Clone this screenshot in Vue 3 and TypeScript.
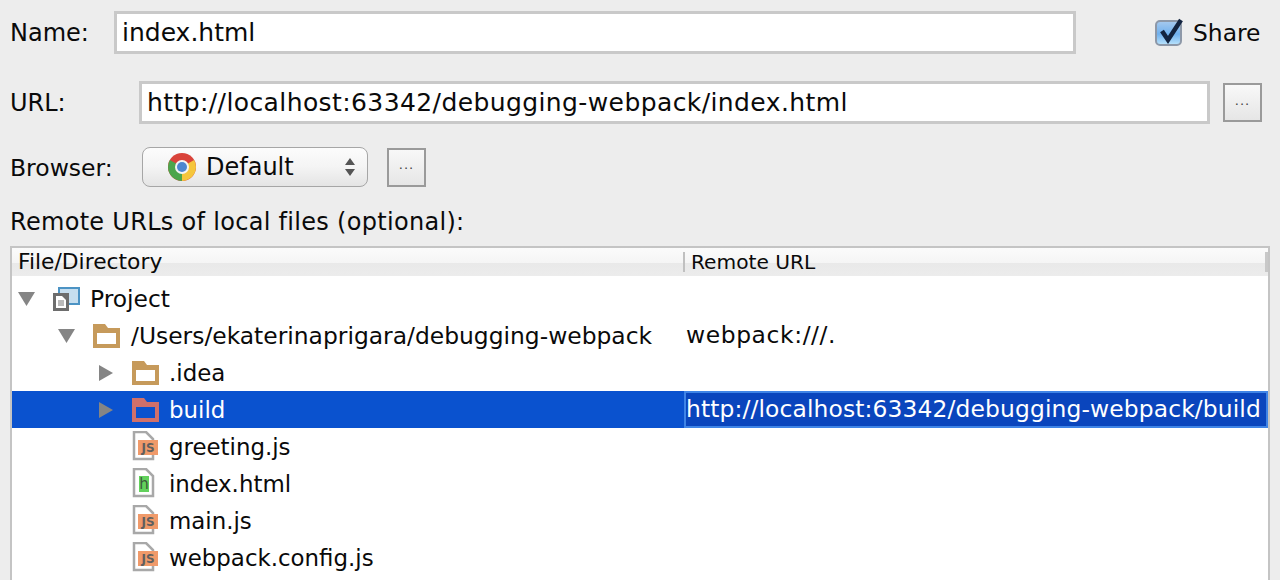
<script setup lang="ts">
interface TreeRow {
  name: string;
  depth: number;
  arrow?: 'open' | 'closed';
  icon: 'project' | 'folder' | 'js' | 'html';
  remote?: string;
  selected?: boolean;
}

const rows: TreeRow[] = [
  { name: 'Project', depth: 0, arrow: 'open', icon: 'project' },
  { name: '/Users/ekaterinaprigara/debugging-webpack', depth: 1, arrow: 'open', icon: 'folder', remote: 'webpack:///.' },
  { name: '.idea', depth: 2, arrow: 'closed', icon: 'folder' },
  { name: 'build', depth: 2, arrow: 'closed', icon: 'folder', remote: 'http://localhost:63342/debugging-webpack/build', selected: true },
  { name: 'greeting.js', depth: 2, icon: 'js' },
  { name: 'index.html', depth: 2, icon: 'html' },
  { name: 'main.js', depth: 2, icon: 'js' },
  { name: 'webpack.config.js', depth: 2, icon: 'js' },
];
</script>

<template>
  <div class="dialog">
    <div class="row name-row">
      <label class="name-label">Name:</label>
      <div class="field name-field">index.html</div>
      <div class="share">
        <span class="checkbox">
          <svg width="32" height="32" viewBox="0 0 32 32">
            <path d="M7 14 L13 23 L26 3" fill="none" stroke="#12233f" stroke-width="4.5" />
          </svg>
        </span>
        <span>Share</span>
      </div>
    </div>

    <div class="row url-row">
      <label class="url-label">URL:</label>
      <div class="field url-field">http://localhost:63342/debugging-webpack/index.html</div>
      <button class="dots">...</button>
    </div>

    <div class="row browser-row">
      <label class="browser-label">Browser:</label>
      <div class="select">
        <svg class="chrome" width="28" height="28" viewBox="0 0 28 28">
          <circle cx="14" cy="14" r="14" fill="#d9433a" />
          <path d="M14 14 L26.1 7 A14 14 0 0 1 14 28 Z" fill="#f5c63c" />
          <path d="M14 14 L14 28 A14 14 0 0 1 1.9 7 Z" fill="#4ca54c" />
          <circle cx="14" cy="14" r="7" fill="#f4f4f4" />
          <circle cx="14" cy="14" r="5" fill="#4d86d0" />
        </svg>
        <span class="select-text">Default</span>
        <svg class="updown" width="12" height="20" viewBox="0 0 12 20">
          <path d="M6 1 L11 8 L1 8 Z M1 12 L11 12 L6 19 Z" fill="#555" />
        </svg>
      </div>
      <button class="dots browser-dots">...</button>
    </div>

    <div class="section-title">Remote URLs of local files (optional):</div>

    <div class="table">
      <div class="thead">
        <div class="th first">File/Directory</div>
        <div class="th second">Remote URL</div>
      </div>
      <div
        v-for="row in rows"
        :key="row.name"
        class="tr"
        :class="{ selected: row.selected }"
      >
        <div class="cell-name" :class="'depth-' + row.depth">
          <span class="arrow-box">
            <svg v-if="row.arrow === 'open'" width="20" height="16" viewBox="0 0 20 16">
              <path d="M1 1 L18 1 L9.5 15 Z" fill="#858585" />
            </svg>
            <svg v-else-if="row.arrow === 'closed'" class="closed" width="16" height="18" viewBox="0 0 16 18">
              <path d="M1 1 L15 9 L1 17 Z" fill="#858585" />
            </svg>
          </span>
          <span class="icon-box">
            <svg v-if="row.icon === 'project'" width="28" height="24" viewBox="0 0 28 24">
              <rect x="7" y="1" width="20" height="16" fill="#c6deef" stroke="#4c93c4" stroke-width="2" />
              <rect x="1" y="6" width="16" height="18" fill="#6d6d6d" />
              <path d="M4 9 H10 L14 13 V21 H4 Z" fill="#fff" />
              <path d="M6 14 H12 M6 16 H12 M6 18 H12" stroke="#777" />
            </svg>
            <svg v-else-if="row.icon === 'folder'" width="28" height="24" viewBox="0 0 28 24">
              <path
                d="M1 0 H13 L16 4 H28 V24 H1 Z M5 9 V20 H24 V9 Z"
                fill-rule="evenodd"
                :fill="row.selected ? '#d0706a' : '#c69a5b'"
              />
              <path v-if="!row.selected" d="M5 9 V20 H24 V9 Z" fill="#fff" />
            </svg>
            <svg v-else width="28" height="30" viewBox="0 0 28 30" class="page">
              <path d="M3 1 H15 L22 8 V28 H3 Z" fill="#fff" stroke="#a8a8a8" stroke-width="2.5" />
              <template v-if="row.icon === 'js'">
                <rect x="7" y="9" width="20" height="15" fill="#f09a6a" />
                <text x="17" y="21" class="js-mark">JS</text>
              </template>
              <template v-else>
                <rect x="8" y="8" width="10" height="16" fill="#62d15c" />
                <text x="13" y="21" class="h-mark">h</text>
              </template>
            </svg>
          </span>
          <span class="label">{{ row.name }}</span>
        </div>
        <div class="cell-remote" :class="{ editing: row.selected }">{{ row.remote }}</div>
      </div>
    </div>
  </div>
</template>

<style>
html,
body {
  margin: 0;
  background: #ededed;
  overflow: hidden;
}
</style>

<style scoped>
.dialog {
  width: 1280px;
  height: 580px;
  box-sizing: border-box;
  padding: 11px 10px 0;
  overflow: hidden;
  background: #ededed;
  color: #0a0a0a;
  font-family: "DejaVu Sans", sans-serif;
  font-size: 24px;
}
.row {
  display: flex;
  align-items: center;
}
.name-row {
  height: 43px;
}
.url-row {
  height: 43px;
  margin-top: 27px;
}
.browser-row {
  height: 40px;
  margin-top: 23px;
}
.name-label {
  width: 104px;
}
.url-label {
  width: 129px;
}
.browser-label {
  width: 132px;
  font-size: 23.5px;
  padding-top: 2px;
  box-sizing: border-box;
}
.field {
  box-sizing: border-box;
  height: 43px;
  display: flex;
  align-items: center;
  background: #fff;
  border: 3px solid #c9c9c9;
  padding-left: 5px;
  font-size: 25px;
}
.name-field {
  width: 962px;
}
.url-field {
  width: 1071px;
  letter-spacing: 0.4px;
}
.share {
  display: flex;
  align-items: center;
  gap: 11px;
  margin-left: 79px;
  font-size: 23.4px;
}
.checkbox {
  position: relative;
  width: 27px;
  height: 26px;
  box-sizing: border-box;
  border: 2px solid #8d98a8;
  border-radius: 5px;
  background: linear-gradient(#a3c8ee, #6fb0ee 55%, #b5e0fb);
}
.checkbox svg {
  position: absolute;
  left: -2px;
  top: -5px;
}
.dots {
  box-sizing: border-box;
  width: 39px;
  height: 39px;
  margin-left: 13px;
  padding: 0 0 5px;
  border: 2px solid #9a9a9a;
  background: linear-gradient(#f8f8f8, #e6e6e6);
  font: 13px "DejaVu Sans", sans-serif;
  letter-spacing: 1px;
  color: #444;
}
.browser-dots {
  margin-left: 19px;
}
.select {
  box-sizing: border-box;
  width: 226px;
  height: 40px;
  display: flex;
  align-items: center;
  padding-left: 25px;
  border: 1px solid #a6a6a6;
  border-radius: 8px;
  background: linear-gradient(#fcfcfc, #f4f4f4 50%, #e4e4e4);
}
.select-text {
  margin-left: 10px;
}
.updown {
  margin-left: auto;
  margin-right: 11px;
}
.section-title {
  margin-top: 21px;
  height: 28px;
  line-height: 28px;
  letter-spacing: 0.3px;
}
.table {
  box-sizing: border-box;
  width: 1260px;
  height: 340px;
  margin-top: 10px;
  background: #fff;
  border: 2px solid #c4c4c4;
  border-bottom: 0;
  font-size: 23.4px;
  overflow: hidden;
}
.thead {
  display: flex;
  height: 28px;
  margin-bottom: 4px;
  font-size: 20.2px;
  background: linear-gradient(#fbfbfb, #f5f5f5 53%, #e9e9e9 55%, #ececec);
}
.th {
  box-sizing: border-box;
  line-height: 28px;
}
.first {
  width: 671px;
  padding-left: 6px;
  font-size: 21.8px;
}
.second {
  flex: 1;
  padding-left: 6px;
  margin: 4px 0;
  line-height: 20px;
  border-left: 2px solid #c0c0c0;
  border-right: 3px solid #c8c8c8;
}
.tr {
  display: flex;
  align-items: center;
  height: 37px;
}
.tr.selected {
  background: #0a52cf;
  color: #fff;
}
.cell-name {
  box-sizing: border-box;
  width: 672px;
  flex: none;
  display: flex;
  align-items: center;
}
.depth-0 {
  padding-left: 5px;
}
.depth-1 {
  padding-left: 45px;
}
.depth-1 .label {
  margin-left: 1px;
}
.depth-2 {
  padding-left: 84px;
  font-size: 22.9px;
}
.arrow-box {
  width: 35px;
  display: flex;
  align-items: center;
}
.closed {
  margin-left: 2px;
}
.icon-box {
  width: 38px;
  display: flex;
  align-items: center;
}
.page {
  margin-top: -2px;
}
.js-mark {
  font: bold 12px "DejaVu Sans", sans-serif;
  text-anchor: middle;
  fill: #5f5f5f;
}
.h-mark {
  font: 15px "DejaVu Sans", sans-serif;
  text-anchor: middle;
  fill: #3c5a3c;
}
.label {
  white-space: nowrap;
}
.cell-remote {
  flex: 1;
  box-sizing: border-box;
  height: 37px;
  line-height: 33px;
  padding-left: 0;
  white-space: nowrap;
  border: 2px solid transparent;
  letter-spacing: 0.6px;
}
.cell-remote.editing {
  border-color: #3f84e6;
  background: #0a45bd;
  letter-spacing: 0.12px;
}
</style>
